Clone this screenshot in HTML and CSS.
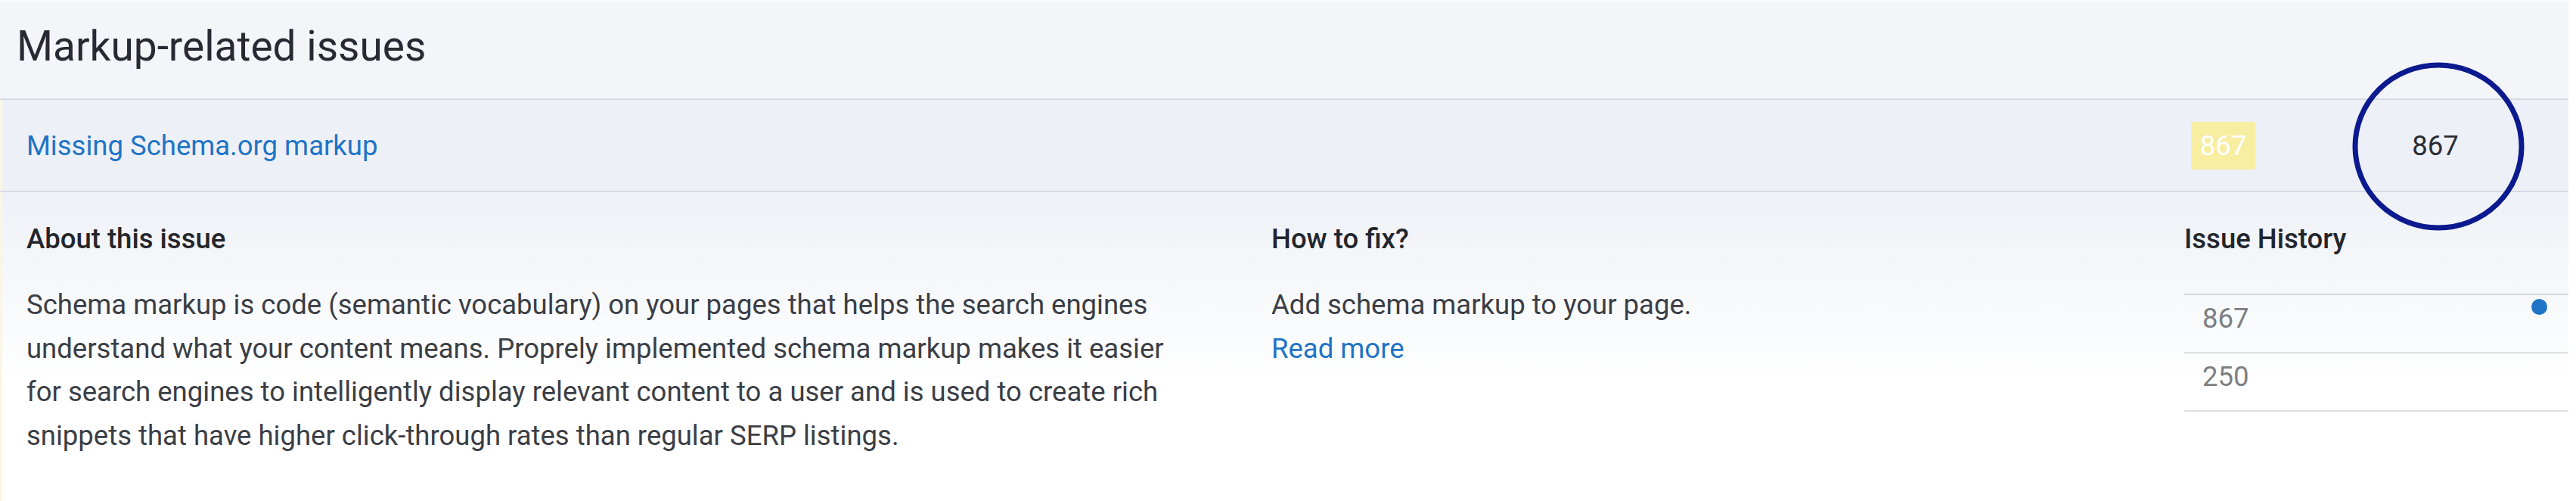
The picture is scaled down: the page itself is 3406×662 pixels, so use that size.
FILE: index.html
```html
<!DOCTYPE html>
<html lang="en">
<head>
    <meta charset="UTF-8">
    <meta name="viewport" content="width=device-width, initial-scale=1.0">
    <title>Markup-related issues</title>
    <link rel="stylesheet" href="styles.css">
</head>
<body>

    <div class="panel">
        <div class="panel-head">
            <h2 class="panel-title">Markup-related issues</h2>
        </div>

        <div class="issue-row">
            <a class="issue-name" href="#">Missing Schema.org markup</a>
            <span class="issue-badge">867</span>
            <span class="issue-count">
                867
                <!-- hand drawn marker round the count -->
                <svg class="mark-circle" width="228" height="223" viewBox="0 0 228 223">
                    <ellipse cx="114" cy="111.5" rx="110" ry="107.5" fill="none" stroke="#0b1a8e" stroke-width="7"/>
                </svg>
            </span>
        </div>

        <div class="issue-details">
            <div class="detail-col detail-about">
                <h3 class="detail-title">About this issue</h3>
                <p class="detail-text">Schema markup is code (semantic vocabulary) on your pages that helps the search engines understand what your content means. Proprely implemented schema markup makes it easier for search engines to intelligently display relevant content to a user and is used to create rich snippets that have higher click-through rates than regular SERP listings.</p>
            </div>
            <div class="detail-col">
                <h3 class="detail-title">How to fix?</h3>
                <p class="detail-text">Add schema markup to your page.<br><a class="read-more" href="#">Read more</a></p>
            </div>
            <div class="detail-col">
                <h3 class="detail-title">Issue History</h3>
                <ul class="history">
                    <li class="history-row"><span>867</span><span class="history-dot"></span></li>
                    <li class="history-row"><span>250</span></li>
                </ul>
            </div>
        </div>
    </div>

</body>
</html>
```

FILE: styles.css
```css
body {
    margin: 0;
    font-family: 'Roboto', 'Liberation Sans', sans-serif;
    background-color: #fff;
    color: #3b3e45;
}

.panel {
    width: 3396px;
    height: 662px;
    display: flex;
    flex-direction: column;
}

.panel-head {
    height: 132px;
    box-sizing: border-box;
    padding: 34px 0 0 22px;
    background-color: #f3f5f9;
    border-top: 3px solid #f8f9fb;
    border-bottom: 2px solid #d6dce6;
}

.panel-title {
    margin: 0;
    margin-top: -3px;
    font-size: 55px;
    line-height: 55px;
    font-weight: 400;
    color: #272a32;
}

.issue-row {
    height: 120px;
    display: flex;
    align-items: center;
    padding: 0 16px 0 35px;
    background-color: #edf0f6;
    border-bottom: 2px solid #d6dce6;
    box-shadow: inset 3px 0 0 #faf6e2;
}

.issue-name {
    flex: 1;
    font-size: 36.5px;
    color: #1f74c6;
    text-decoration: none;
}

.issue-badge {
    width: 85px;
    height: 63px;
    display: flex;
    align-items: center;
    justify-content: center;
    margin-right: 78px;
    background-color: #f8eea2;
    border-radius: 3px;
    color: #fff;
    font-size: 36.5px;
}

.issue-count {
    width: 320px;
    align-self: stretch;
    display: flex;
    align-items: center;
    justify-content: center;
    position: relative;
    font-size: 36.5px;
    color: #2b2d33;
}

.mark-circle {
    position: absolute;
    left: 50px;
    top: -50px;
}

.issue-details {
    flex: 1;
    display: grid;
    grid-template-columns: 1646px 1207px 1fr;
    padding: 33px 0 0 35px;
    background: linear-gradient(#eef1f6, #fff 62%);
    box-shadow: inset 3px 0 0 #faf6e2;
}

.detail-about {
    padding-right: 88px;
}

.detail-title {
    margin: 0 0 30px;
    font-size: 36.5px;
    line-height: 57px;
    font-weight: 500;
    color: #23262d;
}

.detail-text {
    margin: 0;
    font-size: 36.5px;
    line-height: 57.5px;
    color: #3b3e45;
}

.read-more {
    color: #1f74c6;
    text-decoration: none;
}

.history {
    list-style: none;
    margin: 44px 0 0;
    padding: 0;
    border-top: 2px solid #d6d8dc;
}

.history-row {
    height: 77px;
    box-sizing: border-box;
    display: flex;
    justify-content: space-between;
    align-items: flex-start;
    padding: 2px 28px 0 24px;
    border-bottom: 2px solid #dcdee1;
    font-size: 36.5px;
    line-height: 57px;
    color: #7d7f83;
}

.history-dot {
    width: 21px;
    height: 21px;
    margin-top: 3px;
    border-radius: 50%;
    background-color: #1f74c6;
}
```
